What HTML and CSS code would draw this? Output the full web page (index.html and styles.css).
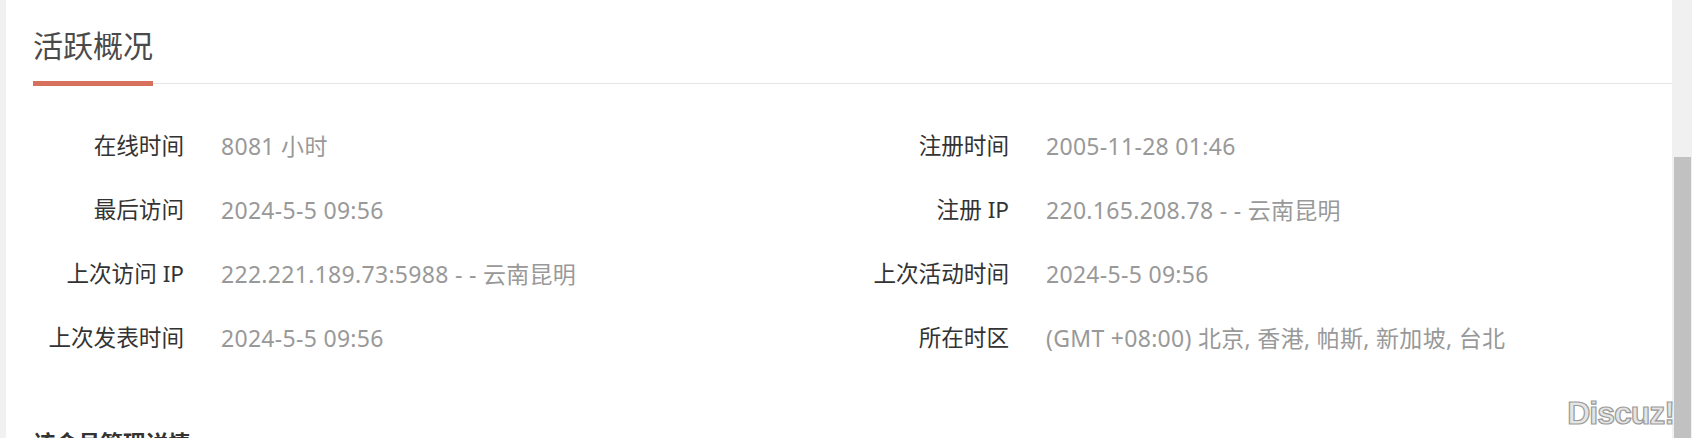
FILE: index.html
```html
<!DOCTYPE html>
<html lang="zh-CN">
<head>
<meta charset="utf-8">
<title>活跃概况</title>
<link rel="stylesheet" href="styles.css">
</head>
<body>
<div class="page">
  <div class="gutter"></div>
  <main class="panel">
    <div class="tabs"><h2 class="tab">活跃概况</h2></div>
    <div class="grid">
      <div class="label">在线时间</div><div class="value">8081 小时</div>
      <div class="label">注册时间</div><div class="value">2005-11-28 01:46</div>
      <div class="label">最后访问</div><div class="value">2024-5-5 09:56</div>
      <div class="label">注册 IP</div><div class="value">220.165.208.78 - - 云南昆明</div>
      <div class="label">上次访问 IP</div><div class="value">222.221.189.73:5988 - - 云南昆明</div>
      <div class="label">上次活动时间</div><div class="value">2024-5-5 09:56</div>
      <div class="label">上次发表时间</div><div class="value">2024-5-5 09:56</div>
      <div class="label">所在时区</div><div class="value">(GMT +08:00) 北京, 香港, 帕斯, 新加坡, 台北</div>
    </div>
    <h3 class="next">该会员管理详情</h3>
  </main>
  <div class="scrollbar"><div class="thumb"></div></div>
  <div class="watermark">Discuz!</div>
</div>
</body>
</html>
```
FILE: styles.css
```css
html, body {
  margin: 0;
  padding: 0;
  background: #ffffff;
}
body {
  font-family: "Noto Sans", "Noto Sans CJK SC", sans-serif;
}
.page {
  position: relative;
  display: flex;
  width: 1692px;
  height: 438px;
  overflow: hidden;
}
.gutter {
  width: 6px;
  flex: none;
  background: #f1f1f1;
}
.panel {
  flex: 1;
  min-width: 0;
  padding: 24px 0 0 27px;
  background: #ffffff;
}
.tabs {
  display: flex;
  border-bottom: 1px solid #e6e6e6;
}
.tab {
  margin: 0 0 -3px 0;
  padding: 0 0 17px 0;
  font-size: 30px;
  line-height: 40px;
  font-weight: 400;
  color: #4a4a4a;
  border-bottom: 5px solid #d8705e;
  font-family: "Noto Sans CJK SC", sans-serif;
}
.grid {
  display: grid;
  grid-template-columns: 151px 600px 151px 1fr;
  column-gap: 37px;
  row-gap: 34px;
  grid-auto-rows: 30px;
  margin-top: 47px;
  font-size: 23px;
  line-height: 30px;
}
.label {
  text-align: right;
  color: #333333;
  white-space: nowrap;
  font-size: 22.6px;
}
.value {
  color: #999999;
  white-space: nowrap;
  letter-spacing: 0.3px;
}
.next {
  margin: 74px 0 0 0;
  font-size: 22.5px;
  line-height: 30px;
  font-weight: 700;
  color: #333333;
  font-family: "Noto Sans CJK SC", sans-serif;
}
.scrollbar {
  width: 20px;
  flex: none;
  background: #f0f0f0;
  display: flex;
  justify-content: center;
}
.thumb {
  width: 17px;
  margin-top: 157px;
  margin-left: 1px;
  height: 300px;
  background: #c1c1c1;
}
.watermark {
  position: absolute;
  right: 18px;
  bottom: 8px;
  font-family: "Liberation Sans", Arial, sans-serif;
  font-weight: 700;
  font-size: 32px;
  letter-spacing: -1px;
  line-height: 34px;
  color: #e4e4e4;
  -webkit-text-stroke: 1.2px #9a9a9a;
}
```
